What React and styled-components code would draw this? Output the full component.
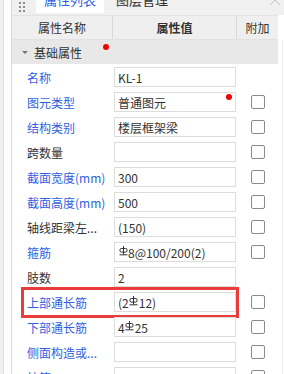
import React from "react";
import styled, { createGlobalStyle } from "styled-components";

const GlobalStyle = createGlobalStyle`
  html, body {
    margin: 0;
    padding: 0;
    background: #ffffff;
    overflow: hidden;
  }
  body {
    font-family: "Noto Sans CJK SC", "Noto Sans", sans-serif;
    font-size: 12px;
    color: #333;
  }
`;

const rows = [
  { label: "名称", blue: true, value: "KL-1", check: false },
  { label: "图元类型", blue: true, value: "普通图元", dot: true },
  { label: "结构类别", blue: true, value: "楼层框架梁" },
  { label: "跨数量", value: "" },
  { label: "截面宽度(mm)", blue: true, value: "300" },
  { label: "截面高度(mm)", blue: true, value: "500" },
  { label: "轴线距梁左...", value: "(150)" },
  { label: "箍筋", blue: true, value: ["", "8@100/200(2)"] },
  { label: "肢数", value: "2", check: false },
  { label: "上部通长筋", blue: true, value: ["(2", "12)"], mark: true },
  { label: "下部通长筋", blue: true, value: ["4", "25"] },
  { label: "侧面构造或...", blue: true, value: "" },
  { label: "拉筋", blue: true, value: "" },
];

const Rebar = () => (
  <RebarIcon viewBox="0 0 9 10" width="9" height="10">
    <line x1="4.5" y1="0" x2="4.5" y2="8.5" stroke="#333" strokeWidth="1" />
    <rect x="1" y="2.5" width="7" height="3.6" rx="1.2" fill="none" stroke="#333" strokeWidth="1" />
    <line x1="0.5" y1="8.8" x2="8.5" y2="8.8" stroke="#333" strokeWidth="1" />
  </RebarIcon>
);

const renderValue = (value) => {
  if (Array.isArray(value)) {
    return (
      <>
        {value[0]}
        <Rebar />
        {value[1]}
      </>
    );
  }
  return value;
};

const App = () => {
  return (
    <Page>
      <GlobalStyle />
      <Gutter />
      <Panel>
        <TabBar>
          <Grip>
            {Array.from({ length: 6 }).map((_, i) => (
              <span key={i} />
            ))}
          </Grip>
          <Tab $active>属性列表</Tab>
          <Tab>图层管理</Tab>
          <Chevron viewBox="0 0 12 7" width="12" height="7">
            <polyline points="1,6 6,1 11,6" fill="none" stroke="#c4c4c4" strokeWidth="1" />
          </Chevron>
        </TabBar>
        <Body>
          <Table>
            <HeadRow>
              <HeadCell>属性名称</HeadCell>
              <HeadCell $bold>属性值</HeadCell>
              <HeadCell $last>附加</HeadCell>
            </HeadRow>
            <GroupRow>
              <Caret />
              基础属性
              <GroupDot />
            </GroupRow>
            {rows.map((r) => (
              <Row key={r.label}>
                <Label $blue={r.blue}>{r.label}</Label>
                <ValueCell>
                  <ValueBox>
                    {renderValue(r.value)}
                    {r.dot && <InputDot />}
                  </ValueBox>
                </ValueCell>
                <CheckCell>{r.check !== false && <Check />}</CheckCell>
                {r.mark && <Highlight />}
              </Row>
            ))}
          </Table>
          <Track />
        </Body>
      </Panel>
    </Page>
  );
};

const Page = styled.div`
  display: flex;
  width: 284px;
  height: 374px;
  overflow: hidden;
  background: #fff;
`;

const Gutter = styled.div`
  width: 8px;
  flex-shrink: 0;
  border-left: 3px solid #f0f0f0;
  box-shadow: inset 1px 0 0 #e2e2e2;
`;

const Panel = styled.div`
  flex: 1;
  display: flex;
  flex-direction: column;
  border-left: 1px solid #d9d9d9;
  min-width: 0;
`;

const TabBar = styled.div`
  display: flex;
  align-items: flex-start;
  height: 30px;
  margin-top: -15px;
  background: #f0f0f0;
  position: relative;
  flex-shrink: 0;
`;

const Grip = styled.div`
  display: grid;
  grid-template-columns: 2px 2px;
  grid-auto-rows: 2px;
  gap: 2px 2px;
  width: 24px;
  padding: 17px 0 0 7px;
  box-sizing: border-box;

  span {
    background: #8a8a8a;
  }
`;

const Tab = styled.div`
  height: 28px;
  line-height: 30px;
  width: 68px;
  text-align: center;
  font-size: 13px;
  color: ${(p) => (p.$active ? "#2f5fe0" : "#333")};
  background: ${(p) => (p.$active ? "#fff" : "transparent")};
  margin-right: 4px;
`;

const Chevron = styled.svg`
  margin-left: auto;
  margin-right: 3px;
  margin-top: 14px;
`;

const Body = styled.div`
  display: flex;
  flex: 1;
  min-height: 0;
`;

const Table = styled.div`
  width: 266px;
  flex-shrink: 0;
  display: flex;
  flex-direction: column;
`;

const Track = styled.div`
  flex: 1;
  margin-top: 25px;
  border-right: 1px solid #ececec;
  margin-right: 1px;
`;

const HeadRow = styled.div`
  display: grid;
  grid-template-columns: 101px 124px 41px;
  height: 25px;
  background: #efefef;
  border-top: 1px solid #e2e2e2;
  border-bottom: 1px solid #e2e2e2;
  box-sizing: border-box;
  flex-shrink: 0;
`;

const HeadCell = styled.div`
  display: flex;
  align-items: center;
  justify-content: center;
  font-size: 12px;
  color: #333;
  font-weight: ${(p) => (p.$bold ? 700 : 400)};
  border-right: ${(p) => (p.$last ? "none" : "1px solid #d9d9d9")};
`;

const GroupRow = styled.div`
  display: flex;
  align-items: center;
  height: 24px;
  padding-left: 10px;
  background: #e8e8e8;
  font-size: 12px;
  color: #333;
  position: relative;
  flex-shrink: 0;
`;

const Caret = styled.span`
  width: 0;
  height: 0;
  border-left: 3px solid transparent;
  border-right: 3px solid transparent;
  border-top: 3px solid #777;
  margin-right: 6px;
`;

const GroupDot = styled.span`
  position: absolute;
  left: 91px;
  top: 4px;
  width: 6px;
  height: 6px;
  border-radius: 50%;
  background: #f20000;
`;

const Row = styled.div`
  display: grid;
  grid-template-columns: 101px 124px 41px;
  height: 25px;
  position: relative;
  flex-shrink: 0;
`;

const Label = styled.div`
  display: flex;
  align-items: center;
  padding-left: 15px;
  padding-top: 1px;
  font-size: 12px;
  white-space: nowrap;
  color: ${(p) => (p.$blue ? "#2f5fe0" : "#333")};
`;

const ValueCell = styled.div`
  padding: 3px 0 2px 1px;
`;

const ValueBox = styled.div`
  position: relative;
  height: 20px;
  width: 122px;
  box-sizing: border-box;
  border: 1px solid #dcdcdc;
  padding-left: 3px;
  display: flex;
  align-items: center;
  font-family: "Noto Sans CJK SC", "Noto Sans", sans-serif;
  font-size: 12px;
  color: #333;
  white-space: nowrap;
`;

const InputDot = styled.span`
  position: absolute;
  right: 3px;
  top: 1px;
  width: 6px;
  height: 6px;
  border-radius: 50%;
  background: #f20000;
`;

const RebarIcon = styled.svg`
  margin: 0 0.5px 3px;
`;

const CheckCell = styled.div`
  display: flex;
  align-items: center;
  justify-content: center;
`;

const Check = styled.span`
  width: 14px;
  height: 14px;
  box-sizing: border-box;
  border: 1px solid #8a8a8a;
  border-radius: 2px;
  background: #fff;
  margin-left: 1px;
`;

const Highlight = styled.div`
  position: absolute;
  left: 9px;
  top: -2px;
  width: 218px;
  height: 31px;
  box-sizing: border-box;
  border: 3px solid #ec3b3b;
  pointer-events: none;
`;

export default App;
